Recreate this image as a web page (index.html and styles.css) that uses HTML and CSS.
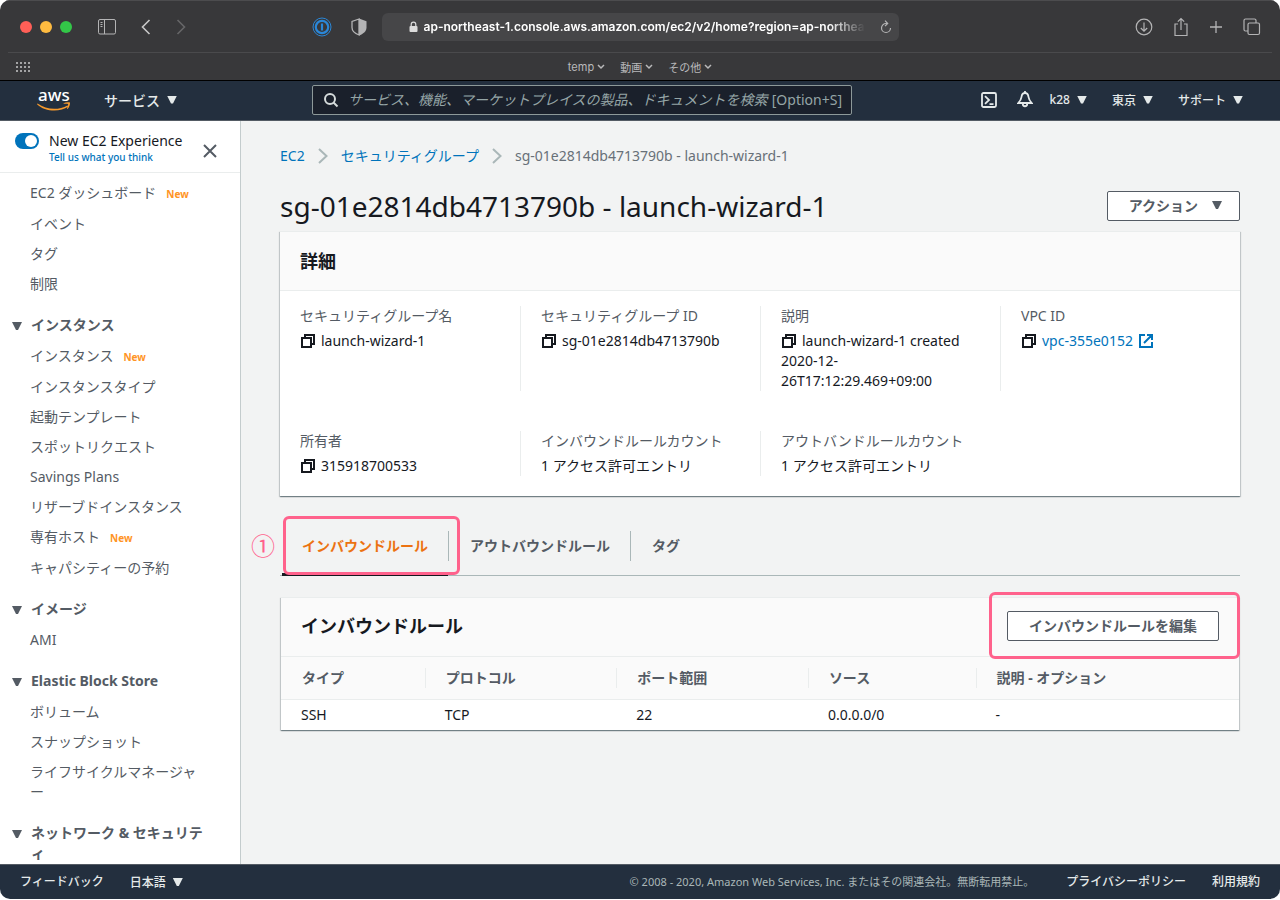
FILE: index.html
```html
<!DOCTYPE html>
<html lang="ja">
<head>
    <meta charset="UTF-8">
    <meta name="viewport" content="width=device-width, initial-scale=1.0">
    <title>EC2 Management Console</title>
    <link rel="stylesheet" href="styles.css">
</head>
<body>
    <div class="window">
        <div class="toolbar">
            <div class="toolbar-left">
                <div class="lights">
                    <button class="light red" aria-label="Close"></button>
                    <button class="light yellow" aria-label="Minimize"></button>
                    <button class="light green" aria-label="Zoom"></button>
                </div>
                <button class="icon-btn panel-btn" aria-label="Sidebar">
                    <svg width="18" height="16" viewBox="0 0 18 16" fill="none" stroke="#b4b4b5"><rect x=".5" y=".5" width="17" height="14.5" rx="1.5"/><path d="M6.5 .5v14.5M2.5 3.5h2M2.5 5.5h2M2.5 7.5h2"/></svg>
                </button>
                <button class="icon-btn back-btn" aria-label="Back">
                    <svg width="10" height="16" viewBox="0 0 10 16" fill="none" stroke="#c8c8c8" stroke-width="1.6"><path d="M8.5 1L1.5 8l7 7"/></svg>
                </button>
                <button class="icon-btn" aria-label="Forward">
                    <svg width="10" height="16" viewBox="0 0 10 16" fill="none" stroke="#666668" stroke-width="1.6"><path d="M1.5 1l7 7-7 7"/></svg>
                </button>
                <div class="extensions">
                    <button class="icon-btn" aria-label="1Password">
                        <svg width="20" height="20" viewBox="0 0 20 20" fill="none" stroke="#2a87d8"><circle cx="10" cy="10" r="9"/><circle cx="10" cy="10" r="6.2" stroke-width="2.2"/><path d="M10 6.5v7" stroke-width="2.2"/></svg>
                    </button>
                    <button class="icon-btn" aria-label="Privacy report">
                        <svg width="16" height="18" viewBox="0 0 16 18"><path d="M8 1L1 3.5v6c0 3.500 3 6 7 7.500z" fill="none" stroke="#b4b4b5" stroke-width="1.3"/><path d="M8 .5l7.500 2.700v6.300c0 4-3.500 6.500-7.500 8z" fill="#b4b4b5"/></svg>
                    </button>
                </div>
            </div>
            <div class="address">
                <svg class="lock" width="9" height="12" viewBox="0 0 9 12"><rect x=".5" y="5" width="8" height="6" rx="1" fill="#dcdcdc"/><path d="M2.200 5.500V3.500a2.300 2.300 0 0 1 4.600 0v2" fill="none" stroke="#dcdcdc" stroke-width="1.2"/></svg>
                <input class="url" type="text" aria-label="Address" value="ap-northeast-1.console.aws.amazon.com/ec2/v2/home?region=ap-northeast-1">
                <button class="icon-btn" aria-label="Reload">
                    <svg width="12" height="14" viewBox="0 0 12 14" fill="none" stroke="#b4b4b5" stroke-width="1.2"><path d="M7 3.500H6A4.500 4.500 0 1 0 10.500 8M5 .7l2.700 2.800L5 6.200"/></svg>
                </button>
            </div>
            <div class="toolbar-right">
                <button class="icon-btn" aria-label="Downloads">
                    <svg width="18" height="18" viewBox="0 0 18 18" fill="none" stroke="#b4b4b5" stroke-width="1.2"><circle cx="9" cy="9" r="7.8"/><path d="M9 4.500v8.500M5.800 10L9 13.200 12.200 10"/></svg>
                </button>
                <button class="icon-btn" aria-label="Share">
                    <svg width="16" height="20" viewBox="0 0 16 20" fill="none" stroke="#b4b4b5" stroke-width="1.2"><path d="M5 7H2v11.500h12V7h-3M8 13V1.500M4.800 4.700L8 1.500l3.200 3.200"/></svg>
                </button>
                <button class="icon-btn" aria-label="New tab">
                    <svg width="14" height="14" viewBox="0 0 14 14" stroke="#b4b4b5" stroke-width="1.3"><path d="M7 1v12M1 7h12"/></svg>
                </button>
                <button class="icon-btn" aria-label="Tabs">
                    <svg width="18" height="18" viewBox="0 0 18 18" fill="none" stroke="#b4b4b5" stroke-width="1.2"><rect x="5" y="5" width="11.5" height="11.5" rx="1.5"/><path d="M5 13H2.500A1.500 1.500 0 0 1 1 11.500V2.500A1.500 1.500 0 0 1 2.500 1h9A1.500 1.500 0 0 1 13 2.500V5"/></svg>
                </button>
            </div>
        </div>
        <div class="bookmarks">
            <button class="icon-btn" aria-label="Top sites">
                <svg width="14" height="10" viewBox="0 0 14 10" fill="none" stroke="#a4a4a5" stroke-width="2" stroke-dasharray="2 2"><path d="M0 1h14M0 5h14M0 9h14"/></svg>
            </button>
            <div class="bookmark-list">
                <button>temp <svg class="chev" viewBox="0 0 8 6"><path d="M1 1l3 3 3-3"/></svg></button>
                <button>動画 <svg class="chev" viewBox="0 0 8 6"><path d="M1 1l3 3 3-3"/></svg></button>
                <button>その他 <svg class="chev" viewBox="0 0 8 6"><path d="M1 1l3 3 3-3"/></svg></button>
            </div>
        </div>

        <header class="nav">
            <a href="#" class="logo" aria-label="AWS">
                <svg width="34" height="32" viewBox="0 -5 34 32"><text x="1" y="12" class="logo-text">aws</text><path d="M.5 14.500c9 6.500 21 7 30 2l.8 1C23 23.500 8 23 0 15.200z" fill="#f79a2d"/><path d="M26.500 14.200c2-1.200 5-1.300 6.500-.7.200 2-.8 5-2.500 6.500l-.6-.5c.8-1.700 1.300-3.500 1.200-4.600-1.300-.4-3-.3-4.500-.1z" fill="#f79a2d"/></svg>
            </a>
            <button class="nav-btn services">サービス <i class="caret"></i></button>
            <div class="search">
                <svg width="16" height="16" viewBox="0 0 16 16" fill="none" stroke="#d5dbdb" stroke-width="2"><circle cx="7" cy="7" r="5"/><path d="M10.500 10.500l4 4"/></svg>
                <input type="text" aria-label="検索" placeholder="サービス、機能、マーケットプレイスの製品、ドキュメントを検索">
                <span>[Option+S]</span>
            </div>
            <div class="nav-right">
                <button class="icon-btn" aria-label="CloudShell">
                    <svg width="16" height="16" viewBox="0 0 16 16" fill="none" stroke="#e5eaea" stroke-width="1.8"><rect x="1" y="1" width="14" height="14" rx="1.5"/><path d="M4 4.200L8 8l-4 3.800M8.500 12.200h4"/></svg>
                </button>
                <button class="icon-btn bell" aria-label="通知">
                    <svg width="16" height="17" viewBox="0 0 16 17" fill="none" stroke="#e5eaea" stroke-width="1.8"><path d="M8 0v2M8 2C5.500 2 4.700 4 4.500 6 4.200 8.500 3 10 1.300 12h13.400C13 10 11.800 8.500 11.500 6 11.300 4 10.500 2 8 2zM5.800 13c0 3 4.400 3 4.400 0"/></svg>
                </button>
                <button class="nav-btn">k28 <i class="caret"></i></button>
                <button class="nav-btn">東京 <i class="caret"></i></button>
                <button class="nav-btn">サポート <i class="caret"></i></button>
            </div>
        </header>

        <div class="content">
            <aside class="sidebar">
                <div class="experience">
                    <input type="checkbox" id="newExperience" class="toggle" checked>
                    <div class="experience-text">
                        <label for="newExperience">New EC2 Experience</label>
                        <a href="#">Tell us what you think</a>
                    </div>
                    <button class="icon-btn" aria-label="閉じる">
                        <svg width="14" height="14" viewBox="0 0 14 14" stroke="#545b64" stroke-width="2"><path d="M1 1l12 12M13 1L1 13"/></svg>
                    </button>
                </div>
                <nav class="menu">
                    <ul>
                        <li><a href="#">EC2 ダッシュボード</a><span class="new">New</span></li>
                        <li><a href="#">イベント</a></li>
                        <li><a href="#">タグ</a></li>
                        <li><a href="#">制限</a></li>
                    </ul>
                    <h3><i class="caret"></i>インスタンス</h3>
                    <ul>
                        <li><a href="#">インスタンス</a><span class="new">New</span></li>
                        <li><a href="#">インスタンスタイプ</a></li>
                        <li><a href="#">起動テンプレート</a></li>
                        <li><a href="#">スポットリクエスト</a></li>
                        <li><a href="#">Savings Plans</a></li>
                        <li><a href="#">リザーブドインスタンス</a></li>
                        <li><a href="#">専有ホスト</a><span class="new">New</span></li>
                        <li><a href="#">キャパシティーの予約</a></li>
                    </ul>
                    <h3><i class="caret"></i>イメージ</h3>
                    <ul>
                        <li><a href="#">AMI</a></li>
                    </ul>
                    <h3><i class="caret"></i>Elastic Block Store</h3>
                    <ul>
                        <li><a href="#">ボリューム</a></li>
                        <li><a href="#">スナップショット</a></li>
                        <li><a href="#">ライフサイクルマネージャー</a></li>
                    </ul>
                    <h3><i class="caret"></i>ネットワーク &amp; セキュリティ</h3>
                </nav>
            </aside>

            <main class="main">
                <nav class="breadcrumb">
                    <a href="#">EC2</a>
                    <svg width="10" height="16" viewBox="0 0 10 16"><path d="M1 1l7.500 7L1 15"/></svg>
                    <a href="#">セキュリティグループ</a>
                    <svg width="10" height="16" viewBox="0 0 10 16"><path d="M1 1l7.500 7L1 15"/></svg>
                    <span>sg-01e2814db4713790b - launch-wizard-1</span>
                </nav>
                <div class="title-row">
                    <h1>sg-01e2814db4713790b - launch-wizard-1</h1>
                    <button class="btn">アクション <i class="caret"></i></button>
                </div>

                <section class="panel">
                    <div class="panel-header">
                        <h2>詳細</h2>
                    </div>
                    <dl class="details">
                        <div>
                            <dt>セキュリティグループ名</dt>
                            <dd><svg class="copy" viewBox="0 0 14 14"><path d="M4 4V1h9v9h-3M1 4h9v9H1z"/></svg>launch-wizard-1</dd>
                        </div>
                        <div>
                            <dt>セキュリティグループ ID</dt>
                            <dd><svg class="copy" viewBox="0 0 14 14"><path d="M4 4V1h9v9h-3M1 4h9v9H1z"/></svg>sg-01e2814db4713790b</dd>
                        </div>
                        <div>
                            <dt>説明</dt>
                            <dd><svg class="copy" viewBox="0 0 14 14"><path d="M4 4V1h9v9h-3M1 4h9v9H1z"/></svg>launch-wizard-1 created 2020-12-26T17:12:29.469+09:00</dd>
                        </div>
                        <div>
                            <dt>VPC ID</dt>
                            <dd><svg class="copy" viewBox="0 0 14 14"><path d="M4 4V1h9v9h-3M1 4h9v9H1z"/></svg><a href="#">vpc-355e0152<svg class="external" viewBox="0 0 14 14"><path d="M6 1H1v12h12V8M8 1h5v5M13 1L5 9"/></svg></a></dd>
                        </div>
                        <div>
                            <dt>所有者</dt>
                            <dd><svg class="copy" viewBox="0 0 14 14"><path d="M4 4V1h9v9h-3M1 4h9v9H1z"/></svg>315918700533</dd>
                        </div>
                        <div>
                            <dt>インバウンドルールカウント</dt>
                            <dd>1 アクセス許可エントリ</dd>
                        </div>
                        <div>
                            <dt>アウトバンドルールカウント</dt>
                            <dd>1 アクセス許可エントリ</dd>
                        </div>
                    </dl>
                </section>

                <nav class="tabs">
                    <a href="#" class="active">インバウンドルール<span class="step">①</span></a>
                    <a href="#">アウトバウンドルール</a>
                    <a href="#">タグ</a>
                </nav>

                <section class="panel rules-panel">
                    <div class="panel-header">
                        <h2>インバウンドルール</h2>
                        <div class="marked">
                            <button class="btn">インバウンドルールを編集</button>
                        </div>
                    </div>
                    <table class="rules">
                        <colgroup>
                            <col class="col-type">
                            <col class="col-protocol">
                            <col class="col-port">
                            <col class="col-source">
                            <col>
                        </colgroup>
                        <thead>
                            <tr>
                                <th><span>タイプ</span></th>
                                <th><span>プロトコル</span></th>
                                <th><span>ポート範囲</span></th>
                                <th><span>ソース</span></th>
                                <th><span>説明 - オプション</span></th>
                            </tr>
                        </thead>
                        <tbody>
                            <tr>
                                <td>SSH</td>
                                <td>TCP</td>
                                <td>22</td>
                                <td>0.0.0.0/0</td>
                                <td>-</td>
                            </tr>
                        </tbody>
                    </table>
                </section>
            </main>
        </div>

        <footer class="footer">
            <a href="#">フィードバック</a>
            <button class="nav-btn">日本語 <i class="caret"></i></button>
            <span class="copyright">© 2008 - 2020, Amazon Web Services, Inc. またはその関連会社。無断転用禁止。</span>
            <a href="#">プライバシーポリシー</a>
            <a href="#">利用規約</a>
        </footer>
    </div>
</body>
</html>
```
FILE: styles.css
```css
* {
    box-sizing: border-box;
}
body {
    margin: 0;
    background: #fff;
    color: #16191f;
    font-family: "Noto Sans", "Noto Sans CJK JP", sans-serif;
    font-size: 14px;
    line-height: 20px;
}
a {
    color: #0073bb;
    text-decoration: none;
}
button, input {
    font-family: inherit;
    margin: 0;
}
ul, dl, dd, h1, h2, h3 {
    margin: 0;
    padding: 0;
}
ul {
    list-style: none;
}
svg {
    flex: none;
}
.window {
    display: flex;
    flex-direction: column;
    height: calc(100vh - 1px);
    border-radius: 10px;
    overflow: hidden;
}
.icon-btn {
    display: flex;
    padding: 0;
    border: none;
    background: none;
}
.caret {
    flex: none;
    display: inline-block;
    width: 10px;
    height: 8px;
    background: currentColor;
    clip-path: polygon(0 0, 100% 0, 60% 100%, 40% 100%);
}

/* browser chrome */
.toolbar {
    flex: none;
    display: grid;
    grid-template-columns: 1fr minmax(0, 517px) 1fr;
    align-items: center;
    height: 52px;
    background: #38383a;
    border-top: 1px solid #4c4c4e;
}
.toolbar-left {
    display: flex;
    align-items: center;
    padding: 0 15px 0 20px;
}
.lights {
    display: flex;
    gap: 8px;
}
.light {
    width: 12px;
    height: 12px;
    padding: 0;
    border: none;
    border-radius: 50%;
}
.red {
    background: #ff5f57;
}
.yellow {
    background: #febb40;
}
.green {
    background: #33c748;
}
.panel-btn {
    margin-left: 26px;
}
.back-btn {
    margin: 0 25px;
}
.extensions {
    display: flex;
    align-items: center;
    gap: 19px;
    margin-left: auto;
}
.address {
    display: flex;
    align-items: center;
    gap: 6px;
    height: 28px;
    padding: 0 7px 0 27px;
    background: #464648;
    border-radius: 6px;
}
.url {
    flex: 1;
    min-width: 0;
    padding: 0;
    border: none;
    background: none;
    color: #fff;
    font: 600 12px Inter, sans-serif;
    mask-image: linear-gradient(to right, #000 90%, transparent 98%);
}
.toolbar-right {
    display: flex;
    align-items: center;
    justify-content: flex-end;
    gap: 20px;
    padding-right: 19px;
}
.bookmarks {
    flex: none;
    display: flex;
    align-items: center;
    height: 29px;
    padding: 2px 16px 0;
    background: linear-gradient(#4a4a4c, #4a4a4c) center top / calc(100% - 16px) 1px no-repeat #38383a;
    border-bottom: 1px solid #000;
}
.bookmark-list {
    flex: 1;
    display: flex;
    justify-content: center;
    gap: 15px;
    padding-right: 14px;
}
.bookmark-list button {
    display: flex;
    align-items: center;
    gap: 3px;
    padding: 0;
    border: none;
    background: none;
    color: #b9b9ba;
    font: 11px Inter, "Noto Sans CJK JP", sans-serif;
}
.chev {
    width: 8px;
    height: 6px;
    fill: none;
    stroke: #b9b9ba;
    stroke-width: 1.5;
}

/* aws navigation */
.nav {
    flex: none;
    display: flex;
    align-items: center;
    height: 40px;
    padding: 0 37px 2px;
    background: #232f3e;
    border-bottom: 1px solid #545b64;
}
.logo {
    display: flex;
}
.logo-text {
    fill: #fff;
    font: 500 17px "Noto Sans", sans-serif;
}
.nav-btn {
    display: flex;
    align-items: center;
    gap: 7px;
    padding: 0;
    border: none;
    background: none;
    color: #e5eaea;
    font-size: 12px;
    font-weight: 500;
}
.services {
    margin-left: 33px;
    font-size: 14px;
}
.search {
    display: flex;
    align-items: center;
    gap: 9px;
    flex: 0 1 540px;
    height: 30px;
    margin-left: 135px;
    padding: 0 9px 0 10px;
    background: #1a202b;
    border: 1px solid #8d9999;
    border-radius: 2px;
    color: #95a5a6;
}
.search input {
    flex: 1;
    min-width: 0;
    padding: 0;
    border: none;
    background: none;
    font-size: 14px;
    font-style: italic;
}
.search input::placeholder {
    color: #95a5a6;
}
.search span {
    margin-left: -9px;
}
.nav-right {
    display: flex;
    align-items: center;
    gap: 25px;
    margin-left: auto;
}
.bell {
    margin: 0 -8px 0 -5px;
}

/* sidebar */
.content {
    flex: 1;
    display: flex;
    min-height: 0;
    background: #f2f3f3;
}
.sidebar {
    flex: none;
    width: 241px;
    overflow: hidden;
    background: #fff;
    border-right: 1px solid #c4cccd;
}
.experience {
    display: flex;
    align-items: center;
    height: 52px;
    padding: 0 23px 0 15px;
    border-bottom: 1px solid #eaeded;
}
.experience .icon-btn {
    margin: 8px 0 0 auto;
}
.toggle {
    appearance: none;
    align-self: flex-start;
    width: 24px;
    height: 16px;
    margin: 12px 10px 0 0;
    background: #0073bb;
    border-radius: 8px;
}
.toggle::before {
    content: "";
    display: block;
    width: 12px;
    height: 12px;
    margin: 2px 0 0 10px;
    background: #fff;
    border-radius: 50%;
}
.experience-text {
    display: flex;
    flex-direction: column;
}
.experience-text a {
    font-size: 10px;
    font-weight: 500;
    line-height: 12px;
}
.menu {
    padding: 5px 34px 0 30px;
    color: #545b64;
    line-break: anywhere;
}
.menu li {
    padding: 5px 0;
}
.menu li a {
    color: #545b64;
}
.new {
    margin-left: 10px;
    color: #ff9425;
    font-size: 10px;
    font-weight: 700;
}
.menu h3 {
    margin: 10px 0 0 1px;
    padding: 6px 0;
    font-size: 14px;
    line-height: 20px;
}
.menu h3 .caret {
    margin: 0 9px 0 -19px;
}

/* main */
.main {
    flex: 1;
    min-width: 0;
    padding: 25px 40px 0 39px;
}
.breadcrumb {
    display: flex;
    align-items: center;
    gap: 13px;
    color: #687078;
}
.breadcrumb path {
    fill: none;
    stroke: #aab7b8;
    stroke-width: 2;
}
.title-row {
    display: flex;
    align-items: center;
    justify-content: space-between;
    height: 34px;
    margin: 23px 0 8px;
}
h1 {
    font-size: 28px;
    font-weight: 400;
    line-height: 34px;
}
h2 {
    font-size: 18px;
    line-height: 24px;
}
.btn {
    display: flex;
    align-items: center;
    gap: 14px;
    height: 30px;
    padding: 0 21px 2px;
    background: #fff;
    border: 1px solid #545b64;
    border-radius: 2px;
    color: #545b64;
    font-size: 14px;
    font-weight: 700;
}
.title-row .btn {
    padding-right: 17px;
}
.panel {
    background: #fff;
    border-top: 1px solid #eaeded;
    box-shadow: 0 1px 1px 0 rgba(0, 28, 36, .35), 1px 1px 1px 0 rgba(0, 28, 36, .15), -1px 1px 1px 0 rgba(0, 28, 36, .15);
}
.panel-header {
    display: flex;
    align-items: center;
    justify-content: space-between;
    height: 59px;
    padding: 0 20px;
    background: #fafafa;
    border-bottom: 1px solid #eaeded;
}
.details {
    display: grid;
    grid-template-columns: repeat(4, 1fr);
    row-gap: 40px;
    padding: 15px 0 20px;
}
.details div {
    padding: 0 20px;
    border-left: 1px solid #eaeded;
}
.details div:nth-child(4n + 1) {
    border-left: none;
}
.details dt {
    margin-bottom: 5px;
    color: #545b64;
}
.copy, .external {
    width: 14px;
    height: 14px;
    fill: none;
    stroke: currentColor;
    stroke-width: 2;
    vertical-align: -2px;
}
.copy {
    margin: 0 6px 0 1px;
    color: #16191f;
}
.external {
    margin-left: 6px;
}
.tabs {
    display: flex;
    align-items: center;
    height: 60px;
    margin: 20px 0 21px;
    border-bottom: 1px solid #aab7b8;
}
.tabs a {
    position: relative;
    padding: 5px 20px 5px 21px;
    border-left: 1px solid #aab7b8;
    color: #545b64;
    font-weight: 700;
}
.tabs .active {
    border-left-color: transparent;
    color: #ec7211;
}
.tabs .active::before {
    content: "";
    position: absolute;
    left: 1px;
    right: 0;
    bottom: -15px;
    height: 3px;
    background: #16191f;
}
.tabs .active::after, .marked::after {
    content: "";
    position: absolute;
    border: 3px solid #ff628c;
    border-radius: 6px;
    pointer-events: none;
}
.tabs .active::after {
    inset: -15px -12px -14px 2px;
}
.step {
    position: absolute;
    left: -30px;
    top: 2px;
    color: #ff628c;
    font: 400 24px/24px "Noto Sans CJK JP", sans-serif;
}
.rules-panel {
    margin: 0 1px;
}
.rules-panel .panel-header {
    padding-bottom: 2px;
}
.marked {
    position: relative;
}
.marked::after {
    inset: -19px -21px -18px -18px;
}
.rules {
    width: 100%;
    table-layout: fixed;
    border-collapse: collapse;
    text-align: left;
}
.col-type {
    width: 15%;
}
.col-protocol, .col-port {
    width: 20%;
}
.col-source {
    width: 17.5%;
}
.rules th {
    padding: 11px 0;
    background: #fafafa;
    border-bottom: 1px solid #eaeded;
    color: #545b64;
}
.rules th span {
    display: block;
    padding-left: 20px;
    border-left: 1px solid #eaeded;
}
.rules th:first-child span {
    border-left-color: transparent;
}
.rules td {
    padding: 5px 20px;
}

/* footer */
.footer {
    flex: none;
    display: flex;
    align-items: center;
    gap: 26px;
    height: 35px;
    padding: 0 20px;
    background: #232f3e;
    border-top: 1px solid #545b64;
    font-size: 12px;
    font-weight: 500;
}
.footer a {
    color: #e5eaea;
}
.copyright {
    margin-left: auto;
    margin-right: 6px;
    color: #aab7b8;
    font-size: 11px;
    font-weight: 400;
}
```
